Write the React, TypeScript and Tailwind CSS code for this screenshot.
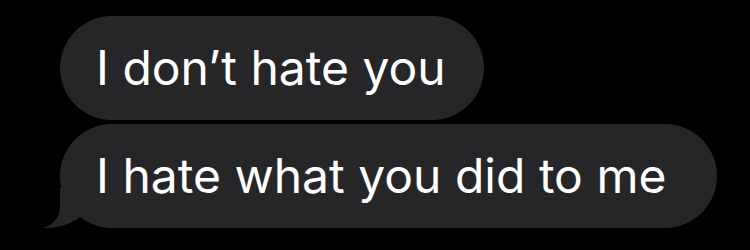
const Bubble = ({ text, width, tail }: { text: string; width: string; tail?: boolean }) => {
  return (
    <div className={`relative flex h-[104px] items-center rounded-full bg-[#262629] pl-[36px] ${width}`}>
      {tail && (
        <svg
          className="absolute bottom-0 left-[-17px]"
          width="45"
          height="40"
          viewBox="0 0 45 40"
        >
          <path
            d="M17 0 L17 18 C17 29 11 37 0 40 C12 40.5 25 37 36 30 L45 0 Z"
            fill="#262629"
          />
        </svg>
      )}
      <span className="whitespace-nowrap text-[48px] leading-none text-white">{text}</span>
    </div>
  );
};

export default function App() {
  return (
    <div
      className="h-[250px] w-[750px] overflow-hidden bg-black pl-[60px] pt-[16px]"
      style={{ fontFamily: "Inter, 'Noto Sans', sans-serif" }}
    >
      <div className="flex flex-col items-start gap-[4px]">
        <Bubble text="I don’t hate you" width="w-[424px]" />
        <Bubble text="I hate what you did to me" width="w-[657px]" tail />
      </div>
    </div>
  );
}
